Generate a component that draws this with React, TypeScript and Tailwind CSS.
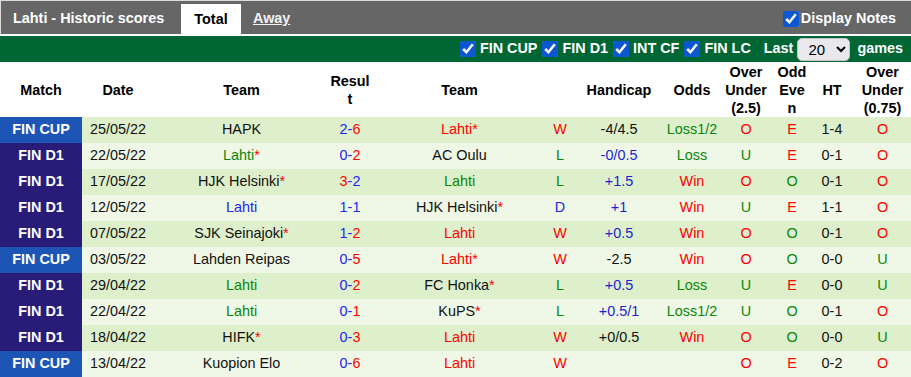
import React from "react";

type Row = {
  match: "FIN CUP" | "FIN D1";
  date: string;
  home: string;
  homeStar?: boolean;
  homeColor: string;
  s1: number;
  s2: number;
  away: string;
  awayStar?: boolean;
  awayColor: string;
  res: "W" | "L" | "D";
  hcp: string;
  hcpBlue?: boolean;
  odds: string;
  ou: "O" | "U";
  oe: "O" | "E";
  ht: string;
  ou2: "O" | "U";
};

const RED = "text-[#ff0000]";
const GREEN = "text-[#0a860a]";
const BLUE = "text-[#2424f0]";
const DARK = "text-[#111]";

const rows: Row[] = [
  { match: "FIN CUP", date: "25/05/22", home: "HAPK", homeColor: DARK, s1: 2, s2: 6, away: "Lahti", awayStar: true, awayColor: RED, res: "W", hcp: "-4/4.5", odds: "Loss1/2", ou: "O", oe: "E", ht: "1-4", ou2: "O" },
  { match: "FIN D1", date: "22/05/22", home: "Lahti", homeStar: true, homeColor: GREEN, s1: 0, s2: 2, away: "AC Oulu", awayColor: DARK, res: "L", hcp: "-0/0.5", hcpBlue: true, odds: "Loss", ou: "U", oe: "E", ht: "0-1", ou2: "O" },
  { match: "FIN D1", date: "17/05/22", home: "HJK Helsinki", homeStar: true, homeColor: DARK, s1: 3, s2: 2, away: "Lahti", awayColor: GREEN, res: "L", hcp: "+1.5", hcpBlue: true, odds: "Win", ou: "O", oe: "O", ht: "0-1", ou2: "O" },
  { match: "FIN D1", date: "12/05/22", home: "Lahti", homeColor: BLUE, s1: 1, s2: 1, away: "HJK Helsinki", awayStar: true, awayColor: DARK, res: "D", hcp: "+1", hcpBlue: true, odds: "Win", ou: "U", oe: "E", ht: "1-1", ou2: "O" },
  { match: "FIN D1", date: "07/05/22", home: "SJK Seinajoki", homeStar: true, homeColor: DARK, s1: 1, s2: 2, away: "Lahti", awayColor: RED, res: "W", hcp: "+0.5", hcpBlue: true, odds: "Win", ou: "O", oe: "O", ht: "0-1", ou2: "O" },
  { match: "FIN CUP", date: "03/05/22", home: "Lahden Reipas", homeColor: DARK, s1: 0, s2: 5, away: "Lahti", awayStar: true, awayColor: RED, res: "W", hcp: "-2.5", odds: "Win", ou: "O", oe: "O", ht: "0-0", ou2: "U" },
  { match: "FIN D1", date: "29/04/22", home: "Lahti", homeColor: GREEN, s1: 0, s2: 2, away: "FC Honka", awayStar: true, awayColor: DARK, res: "L", hcp: "+0.5", hcpBlue: true, odds: "Loss", ou: "U", oe: "E", ht: "0-0", ou2: "U" },
  { match: "FIN D1", date: "22/04/22", home: "Lahti", homeColor: GREEN, s1: 0, s2: 1, away: "KuPS", awayStar: true, awayColor: DARK, res: "L", hcp: "+0.5/1", hcpBlue: true, odds: "Loss1/2", ou: "U", oe: "O", ht: "0-1", ou2: "O" },
  { match: "FIN D1", date: "18/04/22", home: "HIFK", homeStar: true, homeColor: DARK, s1: 0, s2: 3, away: "Lahti", awayColor: RED, res: "W", hcp: "+0/0.5", odds: "Win", ou: "O", oe: "O", ht: "0-0", ou2: "U" },
  { match: "FIN CUP", date: "13/04/22", home: "Kuopion Elo", homeColor: DARK, s1: 0, s2: 6, away: "Lahti", awayColor: RED, res: "W", hcp: "", odds: "", ou: "O", oe: "E", ht: "0-2", ou2: "O" },
];

const cols =
  "grid grid-cols-[82px_72px_175px_42px_177px_24px_94px_52px_56px_36px_44px_57px]";

const Check = () => (
  <input
    type="checkbox"
    checked
    readOnly
    className="w-[16px] h-[16px] accent-[#0b57d0] m-0"
  />
);

const Team = ({ name, star, color }: { name: string; star?: boolean; color: string }) => (
  <span className={color}>
    {name}
    {star && <span className="text-[#ff0000]">*</span>}
  </span>
);

const App: React.FC = () => {
  return (
    <div className="w-[911px] h-[377px] overflow-hidden bg-white font-[Liberation_Sans,Arial,sans-serif] text-[14.4px]">
      {/* title bar */}
      <div className="h-[34px] bg-[#666666] border-t border-l border-[#dcdcdc] flex items-stretch font-bold text-white">
        <div className="w-[180px] pl-[12px] pt-[2px] flex items-center">Lahti - Historic scores</div>
        <div className="w-[60px] mt-[3px] pt-[2px] bg-white text-black flex items-center justify-center">
          Total
        </div>
        <div className="pl-[12px] pt-[2px] flex items-center underline text-[#f2f2f2]">Away</div>
        <div className="ml-auto pr-[15px] pt-[2px] flex items-center gap-[2px]">
          <Check />
          <span>Display Notes</span>
        </div>
      </div>
      <div className="h-[2px] bg-white" />
      {/* filter bar */}
      <div className="h-[26px] bg-[#006633] flex items-center justify-end pr-[8px] font-bold text-white">
        {["FIN CUP", "FIN D1", "INT CF", "FIN LC"].map((l) => (
          <div key={l} className="flex items-center gap-[4px] mr-[5px]">
            <Check />
            <span>{l}</span>
          </div>
        ))}
        <span className="ml-[8px]">Last</span>
        <select
          defaultValue="20"
          className="ml-[4px] w-[53px] h-[23px] bg-[#e9e9ed] border border-[#c4c4cc] rounded-[5px] pl-[6px] text-[15px] font-normal text-black"
        >
          <option value="20">20</option>
        </select>
        <span className="ml-[7px]">games</span>
      </div>
      {/* header */}
      <div className={`${cols} h-[55px] font-bold text-black leading-[18px] text-center`}>
        <div className="flex items-center justify-center">Match</div>
        <div className="flex items-center justify-center">Date</div>
        <div className="flex items-center justify-center">Team</div>
        <div className="flex items-center justify-center">
          Resul
          <br />t
        </div>
        <div className="flex items-center justify-center">Team</div>
        <div />
        <div className="flex items-center justify-center">Handicap</div>
        <div className="flex items-center justify-center">Odds</div>
        <div className="flex items-center justify-center">
          Over
          <br />
          Under
          <br />
          (2.5)
        </div>
        <div className="flex items-center justify-center">
          Odd
          <br />
          Eve
          <br />n
        </div>
        <div className="flex items-center justify-center">HT</div>
        <div className="flex items-center justify-center">
          Over
          <br />
          Under
          <br />
          (0.75)
        </div>
      </div>
      {/* rows */}
      {rows.map((r, i) => {
        const c1 = r.s1 > r.s2 ? RED : BLUE;
        const c2 = r.s2 > r.s1 ? RED : BLUE;
        return (
          <div
            key={i}
            className={`${cols} h-[26px] text-center whitespace-nowrap [&>div]:flex [&>div]:items-center [&>div]:justify-center ${
              i % 2 === 0 ? "bg-[#ddf0cb]" : "bg-[#eff8e6]"
            }`}
          >
            <div
              className={`font-bold text-white ${
                r.match === "FIN CUP" ? "bg-[#1d55b6]" : "bg-[#291c78]"
              }`}
            >
              {r.match}
            </div>
            <div className="text-[#111]">{r.date}</div>
            <div>
              <Team name={r.home} star={r.homeStar} color={r.homeColor} />
            </div>
            <div>
              <span className={c1}>{r.s1}</span>
              <span className={BLUE}>-</span>
              <span className={c2}>{r.s2}</span>
            </div>
            <div>
              <Team name={r.away} star={r.awayStar} color={r.awayColor} />
            </div>
            <div className={r.res === "W" ? RED : r.res === "L" ? GREEN : BLUE}>{r.res}</div>
            <div className={r.hcpBlue ? "text-[#1e1ed2]" : "text-[#111]"}>{r.hcp}</div>
            <div className={r.odds === "Win" ? RED : GREEN}>{r.odds}</div>
            <div className={r.ou === "O" ? RED : GREEN}>{r.ou}</div>
            <div className={r.oe === "E" ? RED : GREEN}>{r.oe}</div>
            <div className="text-[#111]">{r.ht}</div>
            <div className={r.ou2 === "O" ? RED : GREEN}>{r.ou2}</div>
          </div>
        );
      })}
    </div>
  );
};

export default App;
